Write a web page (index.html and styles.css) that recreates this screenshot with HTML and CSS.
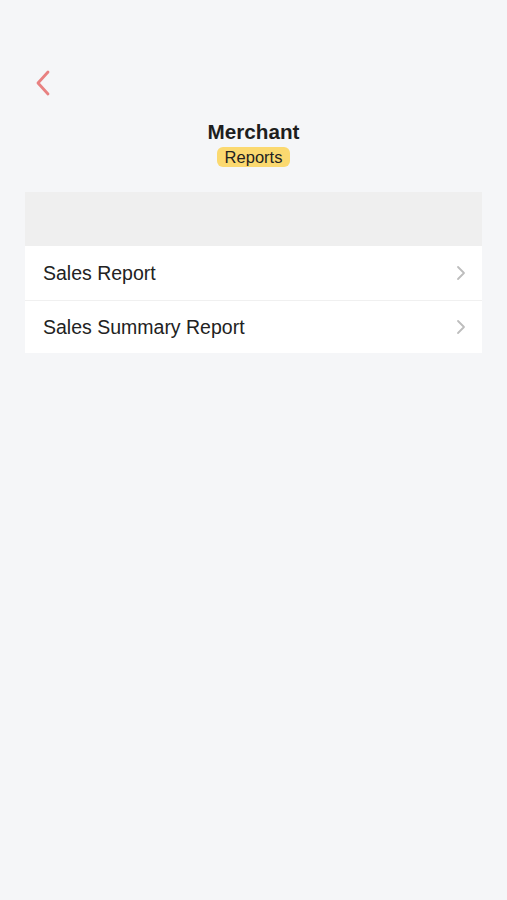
FILE: index.html
```html
<!DOCTYPE html>
<html>
<head>
<meta charset="utf-8">
<link rel="stylesheet" href="styles.css">
</head>
<body>
<div class="page">
  <div class="topbar">
    <button class="back" aria-label="Back">
      <svg width="18" height="26" viewBox="0 0 18 26"><path d="M14 2 L4 13 L14 24" fill="none" stroke="#e88181" stroke-width="2.8" stroke-linecap="round" stroke-linejoin="round"/></svg>
    </button>
  </div>
  <div class="header">
    <div class="title">Merchant</div>
    <div class="badge">Reports</div>
  </div>
  <div class="card">
    <div class="card-head"></div>
    <div class="row">
      <span>Sales Report</span>
      <svg class="chev" width="10" height="16" viewBox="0 0 10 16"><path d="M2 2 L8 8 L2 14" fill="none" stroke="#bdbdbd" stroke-width="1.8" stroke-linecap="round" stroke-linejoin="round"/></svg>
    </div>
    <div class="row">
      <span>Sales Summary Report</span>
      <svg class="chev" width="10" height="16" viewBox="0 0 10 16"><path d="M2 2 L8 8 L2 14" fill="none" stroke="#bdbdbd" stroke-width="1.8" stroke-linecap="round" stroke-linejoin="round"/></svg>
    </div>
  </div>
</div>
</body>
</html>
```

FILE: styles.css
```css
html, body {
  margin: 0;
  padding: 0;
  background: #f5f6f8;
  font-family: "Liberation Sans", Arial, sans-serif;
  color: #222;
}
.page {
  padding: 0 25px 0 25px;
}
.topbar {
  height: 96px;
  display: flex;
  align-items: flex-end;
}
.back {
  border: 0;
  background: none;
  padding: 0;
  margin-left: 9px;
  width: 18px;
  height: 26px;
  display: block;
}
.back svg { display: block; }
.header {
  margin-top: 24px;
  display: flex;
  flex-direction: column;
  align-items: center;
}
.title {
  font-size: 20.7px;
  font-weight: bold;
  line-height: 24px;
  color: #1e1e1e;
}
.badge {
  margin-top: 3px;
  background: #fbd970;
  border-radius: 6px;
  padding: 0 8px;
  font-size: 16.5px;
  line-height: 20px;
  color: #222;
}
.card {
  margin-top: 25px;
  background: #fff;
}
.card-head {
  height: 54px;
  background: #efefef;
}
.row {
  height: 54px;
  display: flex;
  align-items: center;
  justify-content: space-between;
  padding: 0 16px 0 18px;
  font-size: 19.5px;
  color: #222;
}
.row + .row {
  border-top: 1px solid #f0f0f0;
  height: 52px;
}
.chev { display: block; }
```
